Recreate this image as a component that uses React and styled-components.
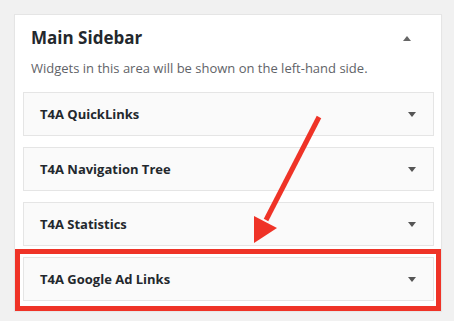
import React from "react";
import styled, { createGlobalStyle } from "styled-components";

const Global = createGlobalStyle`
  html, body { margin: 0; padding: 0; background: #f1f1f1; }
  body { font-family: "Open Sans", "Noto Sans", sans-serif; }
`;

const Page = styled.div`
  position: relative;
  width: 454px;
  height: 321px;
  padding: 14px 0 0 14px;
  box-sizing: border-box;
  overflow: hidden;
`;

const Panel = styled.section`
  width: 428px;
  height: 297px;
  box-sizing: border-box;
  background: #fff;
  border: 1px solid #e5e5e5;
  box-shadow: 0 1px 1px rgba(0, 0, 0, 0.04);
  padding: 11px 7px 0 8px;
`;

const Header = styled.div`
  display: flex;
  align-items: center;
  justify-content: space-between;
  padding: 0 23px 0 8px;
`;

const Title = styled.h2`
  margin: 0;
  font-size: 17px;
  line-height: 24px;
  font-weight: 700;
  color: #23282d;
`;

const Desc = styled.p`
  margin: 9px 0 15px 8px;
  font-size: 13px;
  line-height: 18px;
  color: #5f6368;
`;

const List = styled.div`
  display: flex;
  flex-direction: column;
  gap: 11px;
`;

const Widget = styled.div`
  height: 44px;
  box-sizing: border-box;
  border: 1px solid #e5e5e5;
  background: #fafafa;
  display: flex;
  align-items: center;
  justify-content: space-between;
  padding: 0 17px 0 16px;
`;

const WidgetTitle = styled.span`
  font-size: 13px;
  font-weight: 700;
  color: #23282d;
`;

const Tri = styled.span`
  width: 0;
  height: 0;
  border-left: 4px solid transparent;
  border-right: 4px solid transparent;
  ${(p) =>
    p.$up
      ? "border-bottom: 5px solid #666;"
      : "border-top: 5px solid #555;"}
`;

const Highlight = styled.div`
  position: absolute;
  left: 15px;
  top: 249px;
  width: 426px;
  height: 62px;
  box-sizing: border-box;
  border: 5px solid #ef3327;
  pointer-events: none;
`;

const ArrowSvg = styled.svg`
  position: absolute;
  left: 0;
  top: 0;
  pointer-events: none;
`;

const widgets = [
  "T4A QuickLinks",
  "T4A Navigation Tree",
  "T4A Statistics",
  "T4A Google Ad Links",
];

export default function App() {
  return (
    <>
      <Global />
      <Page>
        <Panel>
          <Header>
            <Title>Main Sidebar</Title>
            <Tri $up />
          </Header>
          <Desc>Widgets in this area will be shown on the left-hand side.</Desc>
          <List>
            {widgets.map((w) => (
              <Widget key={w}>
                <WidgetTitle>{w}</WidgetTitle>
                <Tri />
              </Widget>
            ))}
          </List>
        </Panel>
        <Highlight />
        <ArrowSvg width="454" height="321" viewBox="0 0 454 321">
          <line x1="319" y1="117" x2="266" y2="220" stroke="#ef3327" strokeWidth="5" />
          <polygon points="254,243 254,216 277,228" fill="#ef3327" />
        </ArrowSvg>
      </Page>
    </>
  );
}
